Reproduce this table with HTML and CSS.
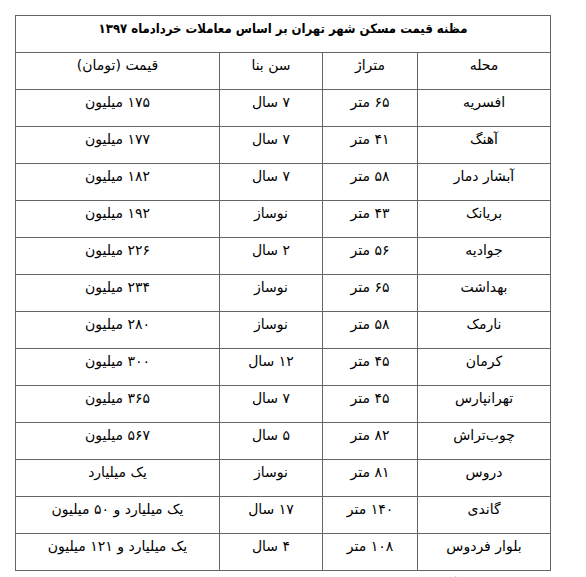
FILE: index.html
```html
<!DOCTYPE html>
<html lang="fa" dir="rtl">
<head>
<meta charset="utf-8">
<link rel="stylesheet" href="styles.css">
</head>
<body>
<div class="page">
<table class="price-table">
<colgroup>
<col class="c-area">
<col class="c-size">
<col class="c-age">
<col class="c-price">
</colgroup>
<tr><td class="title" colspan="4">مظنه قیمت مسکن شهر تهران بر اساس معاملات خردادماه ۱۳۹۷</td></tr>
<tr><td>محله</td><td>متراژ</td><td>سن بنا</td><td>قیمت (تومان)</td></tr>
<tr><td>افسریه</td><td>۶۵ متر</td><td>۷ سال</td><td>۱۷۵ میلیون</td></tr>
<tr><td>آهنگ</td><td>۴۱ متر</td><td>۷ سال</td><td>۱۷۷ میلیون</td></tr>
<tr><td>آبشار دمار</td><td>۵۸ متر</td><td>۷ سال</td><td>۱۸۲ میلیون</td></tr>
<tr><td>بریانک</td><td>۴۳ متر</td><td>نوساز</td><td>۱۹۲ میلیون</td></tr>
<tr><td>جوادیه</td><td>۵۶ متر</td><td>۲ سال</td><td>۲۲۶ میلیون</td></tr>
<tr><td>بهداشت</td><td>۶۵ متر</td><td>نوساز</td><td>۲۳۴ میلیون</td></tr>
<tr><td>نارمک</td><td>۵۸ متر</td><td>نوساز</td><td>۲۸۰ میلیون</td></tr>
<tr><td>کرمان</td><td>۴۵ متر</td><td>۱۲ سال</td><td>۳۰۰ میلیون</td></tr>
<tr><td>تهرانپارس</td><td>۴۵ متر</td><td>۷ سال</td><td>۳۶۵ میلیون</td></tr>
<tr><td>چوب‌تراش</td><td>۸۲ متر</td><td>۵ سال</td><td>۵۶۷ میلیون</td></tr>
<tr><td>دروس</td><td>۸۱ متر</td><td>نوساز</td><td>یک میلیارد</td></tr>
<tr><td>گاندی</td><td>۱۴۰ متر</td><td>۱۷ سال</td><td>یک میلیارد و ۵۰ میلیون</td></tr>
<tr><td>بلوار فردوس</td><td>۱۰۸ متر</td><td>۴ سال</td><td>یک میلیارد و ۱۲۱ میلیون</td></tr>
</table>
<p class="note">بر اساس این گزارش، آپارتمان‌های نوساز و قدیمی در مناطق جنوبی و شرقی شهر تهران با قیمت‌های متفاوتی معامله شده‌اند.</p>
</div>
</body>
</html>
```
FILE: styles.css
```css
html, body {
  margin: 0;
  padding: 0;
  background: #ffffff;
}
.page {
  width: 586px;
  padding: 15px 0 0 0;
  direction: rtl;
  font-family: "DejaVu Sans", "Noto Sans", sans-serif;
  color: #000;
}
.price-table {
  margin-right: 35px;
  width: 536px;
  table-layout: fixed;
  border-collapse: collapse;
  direction: rtl;
}
.c-area { width: 133px; }
.c-size { width: 95px; }
.c-age { width: 103px; }
.c-price { width: 204px; }
.price-table td {
  border: 1px solid #666;
  height: 36px;
  padding: 0;
  vertical-align: top;
  text-align: center;
  font-size: 14px;
  line-height: 25px;
  white-space: nowrap;
}
.price-table td.title {
  font-family: "DejaVu Sans Condensed", "DejaVu Sans", sans-serif;
  font-weight: bold;
  font-size: 13px;
}
.note {
  margin: 3px 15px 0 35px;
  font-size: 12px;
  line-height: 20px;
  color: #555;
}
```
